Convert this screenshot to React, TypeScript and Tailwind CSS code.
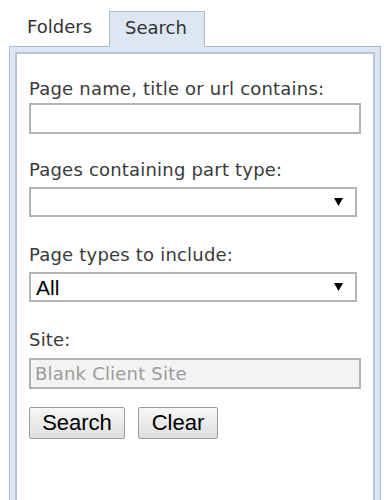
import React from 'react';

const labelClass = 'block text-[18px] leading-[22px] tracking-[0.2px] text-[#3a3a3a]';
const fieldBorder = 'border-2 border-[#b3b3b3]';

function DropArrow() {
  return (
    <svg width="9" height="8" viewBox="0 0 9 8" className="shrink-0">
      <polygon points="0,0 9,0 4.5,8" fill="#000" />
    </svg>
  );
}

function FakeSelect({ value }: { value?: string }) {
  return (
    <div
      className={`flex h-[30px] w-[328px] items-center justify-between bg-white pl-[5px] pr-[12px] ${fieldBorder}`}
    >
      <span className="font-['Liberation_Sans',Arial,sans-serif] text-[21px] leading-none text-black">
        {value ?? ''}
      </span>
      <DropArrow />
    </div>
  );
}

export default function App() {
  return (
    <div className="relative h-[500px] w-[384px] overflow-hidden bg-white font-['DejaVu_Sans',Verdana,sans-serif]">
      {/* Tabs */}
      <div className="flex items-end pl-[10px] pt-[10px]">
        <div className="h-[36px] w-[99px] pl-[17px] pt-[6px] text-[18px] leading-[22px] text-[#333]">
          Folders
        </div>
        <div className="relative z-10 -mb-px h-[36px] w-[96px] border border-b-0 border-[#a8bbcf] bg-[#dce7f3] pl-[15px] pt-[5px] text-[18px] leading-[22px] text-[#333]">
          Search
        </div>
      </div>

      {/* Panel frame */}
      <div className="ml-[9px] h-[480px] w-[372px] border border-[#a8bbcf] bg-[#dce7f3] px-[5px] pt-[5px]">
        <div className="h-full border-2 border-[#b6c6d8] bg-white pl-[12px] pt-[24px]">
          <label className={labelClass}>Page name, title or url contains:</label>
          <div className={`mt-[3px] h-[31px] w-[332px] bg-white ${fieldBorder}`} />

          <label className={`${labelClass} mt-[25px]`}>Pages containing part type:</label>
          <div className="mt-[6px]">
            <FakeSelect />
          </div>

          <label className={`${labelClass} mt-[27px]`}>Page types to include:</label>
          <div className="mt-[6px]">
            <FakeSelect value="All" />
          </div>

          <label className={`${labelClass} mt-[27px]`}>Site:</label>
          <div
            className={`mt-[7px] flex h-[31px] w-[332px] items-center bg-[#f3f3f3] pl-[4px] text-[18px] tracking-[0.2px] text-[#9b9b9b] ${fieldBorder}`}
          >
            Blank Client Site
          </div>

          <div className="mt-[18px] flex gap-[13px] font-['Liberation_Sans',Arial,sans-serif] text-[22px] text-black">
            <button className="h-[32px] w-[96px] rounded-[2px] border border-[#9c9c9c] bg-gradient-to-b from-[#f7f7f7] to-[#dedede] leading-none">
              Search
            </button>
            <button className="h-[32px] w-[80px] rounded-[2px] border border-[#9c9c9c] bg-gradient-to-b from-[#f7f7f7] to-[#dedede] leading-none">
              Clear
            </button>
          </div>
        </div>
      </div>
    </div>
  );
}
